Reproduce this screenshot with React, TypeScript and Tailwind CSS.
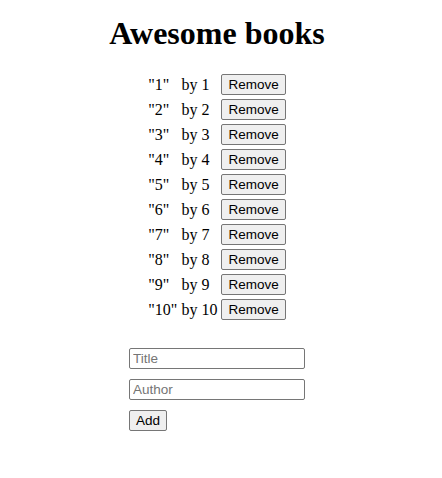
import { useState } from 'react';

interface Book {
  id: number;
  title: string;
  author: string;
}

const INITIAL: Book[] = Array.from({ length: 10 }, (_, i) => ({
  id: i + 1,
  title: String(i + 1),
  author: String(i + 1),
}));

const serif = "font-['Liberation_Serif','Times_New_Roman',serif]";
const sans = "font-['Liberation_Sans',Arial,sans-serif]";

export default function App() {
  const [books, setBooks] = useState<Book[]>(INITIAL);
  const [title, setTitle] = useState('');
  const [author, setAuthor] = useState('');

  const addBook = () => {
    if (!title.trim() || !author.trim()) return;
    setBooks([...books, { id: Date.now(), title, author }]);
    setTitle('');
    setAuthor('');
  };

  return (
    <div className={`w-[434px] bg-white text-black ${serif}`}>
      <h1 className="text-center text-[32px] font-bold leading-[37px] mt-[15px] mb-[19px]">Awesome books</h1>

      {/* book list */}
      <table className="mx-auto border-separate border-spacing-[2px] text-[16px] leading-[19px]">
        <tbody>
          {books.map(book => (
            <tr key={book.id}>
              <td className="p-px text-left align-middle">"{book.title}"</td>
              <td className="p-px text-left align-middle">by {book.author}</td>
              <td className="p-px align-middle">
                <button
                  onClick={() => setBooks(books.filter(b => b.id !== book.id))}
                  className={`block h-[21px] px-[6px] bg-[#efefef] border border-[#767676] rounded-[2px] text-[13.5px] leading-[15px] ${sans}`}
                >
                  Remove
                </button>
              </td>
            </tr>
          ))}
        </tbody>
      </table>

      {/* add form */}
      <div className="w-[176px] mx-auto mt-[25px] flex flex-col items-start gap-[10px]">
        <input
          value={title}
          onChange={e => setTitle(e.target.value)}
          placeholder="Title"
          className={`w-[176px] h-[21px] px-[3px] border border-[#767676] rounded-[2px] text-[13.5px] placeholder-[#757575] ${sans}`}
        />
        <input
          value={author}
          onChange={e => setAuthor(e.target.value)}
          placeholder="Author"
          className={`w-[176px] h-[21px] px-[3px] border border-[#767676] rounded-[2px] text-[13.5px] placeholder-[#757575] ${sans}`}
        />
        <button
          onClick={addBook}
          className={`h-[21px] px-[6px] bg-[#efefef] border border-[#767676] rounded-[2px] text-[13.5px] leading-[15px] ${sans}`}
        >
          Add
        </button>
      </div>
    </div>
  );
}
